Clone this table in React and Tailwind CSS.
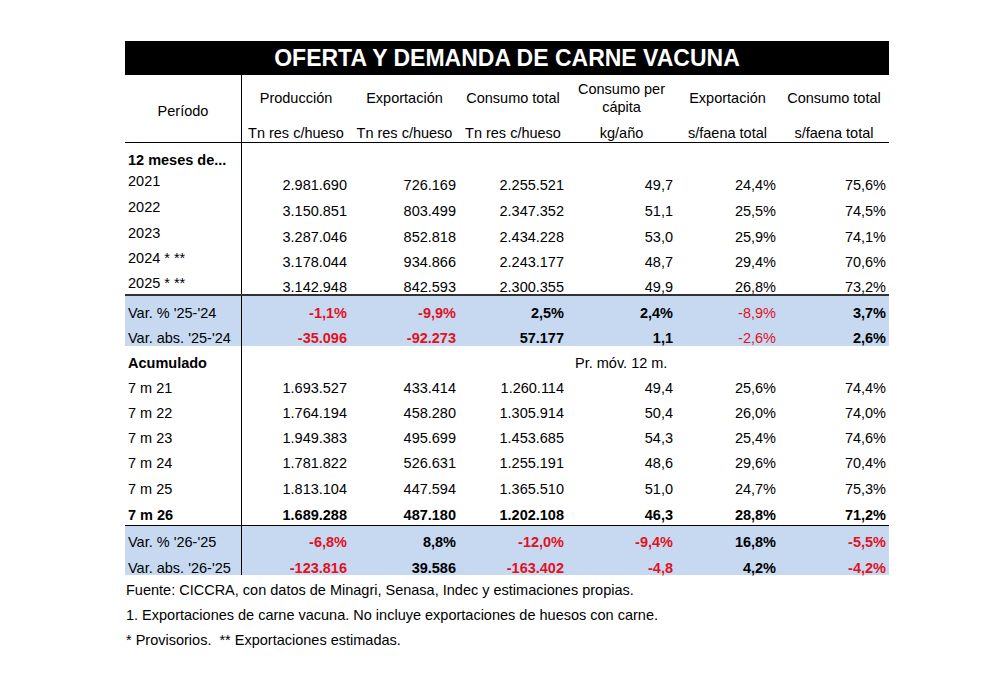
import React from "react";

const cols = "grid grid-cols-[117px_108px_109px_108px_109px_103px_110px]";

const headers = [
    ["Producción", "Tn res c/hueso"],
    ["Exportación", "Tn res c/hueso"],
    ["Consumo total", "Tn res c/hueso"],
    [["Consumo per", "cápita"], "kg/año"],
    ["Exportación", "s/faena total"],
    ["Consumo total", "s/faena total"],
];

const yearRows = [
    ["2021", "2.981.690", "726.169", "2.255.521", "49,7", "24,4%", "75,6%"],
    ["2022", "3.150.851", "803.499", "2.347.352", "51,1", "25,5%", "74,5%"],
    ["2023", "3.287.046", "852.818", "2.434.228", "53,0", "25,9%", "74,1%"],
    ["2024 * **", "3.178.044", "934.866", "2.243.177", "48,7", "29,4%", "70,6%"],
    ["2025 * **", "3.142.948", "842.593", "2.300.355", "49,9", "26,8%", "73,2%"],
];
const yearHeights = ["h-[25px]", "h-[26px]", "h-[25.5px]", "h-[25px]", "h-[27.5px] border-b-2 border-[#333]"];

const yearVar = [
    ["Var. % '25-'24", "-1,1%", "-9,9%", "2,5%", "2,4%", "-8,9%", "3,7%"],
    ["Var. abs. '25-'24", "-35.096", "-92.273", "57.177", "1,1", "-2,6%", "2,6%"],
];

const accRows = [
    ["7 m 21", "1.693.527", "433.414", "1.260.114", "49,4", "25,6%", "74,4%"],
    ["7 m 22", "1.764.194", "458.280", "1.305.914", "50,4", "26,0%", "74,0%"],
    ["7 m 23", "1.949.383", "495.699", "1.453.685", "54,3", "25,4%", "74,6%"],
    ["7 m 24", "1.781.822", "526.631", "1.255.191", "48,6", "29,6%", "70,4%"],
    ["7 m 25", "1.813.104", "447.594", "1.365.510", "51,0", "24,7%", "75,3%"],
];
const accHeights = ["h-[25px]", "h-[25px]", "h-[25px]", "h-[25px]", "h-[26px]"];

const accLast = ["7 m 26", "1.689.288", "487.180", "1.202.108", "46,3", "28,8%", "71,2%"];

const accVar = [
    ["Var. % '26-'25", "-6,8%", "8,8%", "-12,0%", "-9,4%", "16,8%", "-5,5%"],
    ["Var. abs. '26-'25", "-123.816", "39.586", "-163.402", "-4,8", "4,2%", "-4,2%"],
];

const Row = ({row, h, labelPad = "pb-0", pad = "pb-0", bold = false}) => (
    <div className={`${cols} ${h}`}>
        <div className={`flex items-end ${labelPad} pl-[3px] border-r border-black ${bold ? "font-bold" : ""}`}>
            {row[0]}
        </div>
        {row.slice(1).map((v, i) => (
            <div key={i} className={`flex items-end justify-end pr-[3px] ${pad} ${bold ? "font-bold" : ""}`}>
                {v}
            </div>
        ))}
    </div>
);

const VarRow = ({row, h, pad = "pb-0", lightCol = -1}) => (
    <div className={`${cols} ${h} bg-[#c6d9f1]`}>
        <div className={`flex items-end pl-[3px] ${pad} border-r border-black`}>{row[0]}</div>
        {row.slice(1).map((v, i) => (
            <div
                key={i}
                className={`flex items-end justify-end pr-[3px] ${pad} ${i === lightCol ? "font-normal" : "font-bold"} ${
                    v.startsWith("-") ? "text-[#e3101e]" : "text-black"
                }`}
            >
                {v}
            </div>
        ))}
    </div>
);

export default function App() {
    return (
        <div className="w-full h-[685px] bg-white pt-[41px] pl-[125px] text-black text-[14.5px] leading-[13px] font-['Liberation_Sans',Arial,sans-serif]">
            <div className="w-[764px]">
                <div className="h-[34px] bg-black flex items-center justify-center">
                    <h1 className="text-white font-bold text-[23px] leading-none">OFERTA Y DEMANDA DE CARNE VACUNA</h1>
                </div>

                {/* header */}
                <div className={`${cols} h-[68px] border-b-[1.5px] border-black`}>
                    <div className="flex items-center justify-center pt-[5px] border-r border-black leading-[17px]">Período</div>
                    {headers.map(([title, unit], i) => (
                        <div key={i} className="flex flex-col items-center text-center whitespace-nowrap">
                            <div className="h-[45px] flex flex-col items-center justify-center leading-[18px]">
                                {Array.isArray(title) ? title.map((t) => <span key={t}>{t}</span>) : title}
                            </div>
                            <div className="flex-1 flex items-end pb-[2px]">{unit}</div>
                        </div>
                    ))}
                </div>

                {/* 12 meses */}
                <div className={`${cols} h-[24px]`}>
                    <div className="flex items-end pl-[3px] font-bold border-r border-black">12 meses de...</div>
                </div>
                {yearRows.map((r, i) => (
                    <Row key={r[0]} row={r} h={yearHeights[i]} labelPad="pb-[4px]" />
                ))}
                <VarRow row={yearVar[0]} h="h-[24px]" lightCol={4} />
                <VarRow row={yearVar[1]} h="h-[26px]" pad="pb-[1px]" lightCol={4} />

                {/* acumulado */}
                <div className={`${cols} h-[24px]`}>
                    <div className="flex items-end pl-[3px] font-bold border-r border-black">Acumulado</div>
                    <div />
                    <div />
                    <div />
                    <div className="flex items-end pl-[8px] whitespace-nowrap">Pr. móv. 12 m.</div>
                </div>
                {accRows.map((r, i) => (
                    <Row key={r[0]} row={r} h={accHeights[i]} />
                ))}
                <Row row={accLast} h="h-[30px] border-b border-black" labelPad="pb-[3px]" pad="pb-[3px]" bold />
                <VarRow row={accVar[0]} h="h-[23px]" />
                <VarRow row={accVar[1]} h="h-[26px]" />
            </div>

            {/* notes */}
            <div className="pl-[1px] pt-[3px] text-[14.5px] leading-[25px]">
                <p>Fuente: CICCRA, con datos de Minagri, Senasa, Indec y estimaciones propias.</p>
                <p>1. Exportaciones de carne vacuna. No incluye exportaciones de huesos con carne.</p>
                <p>* Provisorios.&nbsp; ** Exportaciones estimadas.</p>
            </div>
        </div>
    );
}
